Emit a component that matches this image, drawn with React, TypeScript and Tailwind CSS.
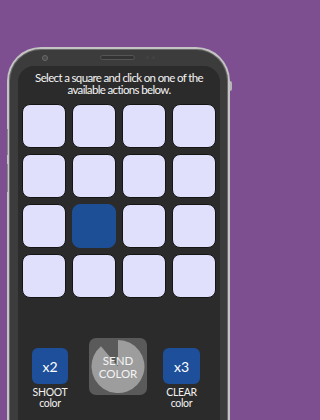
import React from 'react';

const cells = Array.from({ length: 16 }, (_, i) => i);
const selected = 9;

const SendPie: React.FC = () => (
  <svg width="58" height="57" viewBox="0 0 58 57" className="absolute inset-0">
    <path d="M29 28.5 L29 2 A26.5 26.5 0 1 1 11.97 8.2 Z" fill="#9d9d9d" />
  </svg>
);

export default function App() {
  return (
    <div
      className="h-[420px] w-full min-w-[236px] overflow-hidden bg-[#7d4f91] pl-[7px] pt-[47px]"
      style={{ fontFamily: 'Lato, "Open Sans", sans-serif' }}
    >
      <div className="relative h-[400px] w-[223px] rounded-t-[34px] border-2 border-b-0 border-[#c4c4c4] bg-[#3c3c3c] pl-[9px] pr-[8px] shadow-[inset_0_0_0_1px_#6a6a6a]">
        {/* side buttons */}
        <div className="absolute left-[-2px] top-[80px] h-[26px] w-[1px] bg-[#8a8a8a]" />
        <div className="absolute left-[-2px] top-[115px] h-[28px] w-[1px] bg-[#8a8a8a]" />
        <div className="absolute right-[-4px] top-[32px] h-[10px] w-[2px] rounded-r bg-[#b5b5b5]" />

        {/* top bezel */}
        <div className="flex h-[17px] items-center">
          <div className="ml-[24px] h-[6px] w-[6px] rounded-full border border-[#6a6a6a] bg-[#4a4a4a]" />
          <div className="ml-[52px] h-[5px] w-[35px] rounded-full border border-[#555] bg-[#333]" />
          <div className="ml-[11px] flex gap-[3px]">
            <div className="h-[3px] w-[3px] rounded-full bg-[#444]" />
            <div className="h-[3px] w-[3px] rounded-full bg-[#444]" />
          </div>
        </div>

        {/* screen */}
        <div className="h-full rounded-t-[16px] bg-[#2b2b2b] pt-[6px]">
          <p className="text-center text-[11.5px] leading-[12px] tracking-[-0.65px] text-[#f4f4f4]">
            Select a square and click on one of the
            <br />
            available actions below.
          </p>

          <div className="mt-[8px] grid grid-cols-4 gap-[6px] px-[4px]">
            {cells.map((i) => (
              <div
                key={i}
                className={`h-[44px] rounded-[8px] border ${
                  i === selected ? 'border-[#1d4f97] bg-[#1d4f97]' : 'border-[#141414] bg-[#e0e0fc]'
                }`}
              />
            ))}
          </div>

          <div className="mt-[40px] flex items-start">
            <div className="ml-[14px] mt-[10px] flex w-[36px] flex-col items-center">
              <div className="flex h-[36px] w-[36px] items-center justify-center rounded-[6px] bg-[#1d4f9a] text-[14px] text-white">
                x2
              </div>
              <div className="mt-[3px] text-center text-[10.5px] leading-[11px] tracking-[-0.3px] text-[#f2f2f2]">
                SHOOT
                <br />
                color
              </div>
            </div>

            <div className="relative ml-[21px] flex h-[57px] w-[58px] items-center justify-center rounded-[7px] bg-[#5a5a5a]">
              <SendPie />
              <span className="relative text-center text-[11.5px] leading-[13px] text-[#f4f4f4]">
                SEND
                <br />
                COLOR
              </span>
            </div>

            <div className="ml-[16px] mt-[10px] flex w-[37px] flex-col items-center">
              <div className="flex h-[36px] w-[37px] items-center justify-center rounded-[6px] bg-[#1d4f9a] text-[14px] text-white">
                x3
              </div>
              <div className="mt-[3px] text-center text-[10.5px] leading-[11px] tracking-[-0.3px] text-[#f2f2f2]">
                CLEAR
                <br />
                color
              </div>
            </div>
          </div>
        </div>
      </div>
    </div>
  );
}
